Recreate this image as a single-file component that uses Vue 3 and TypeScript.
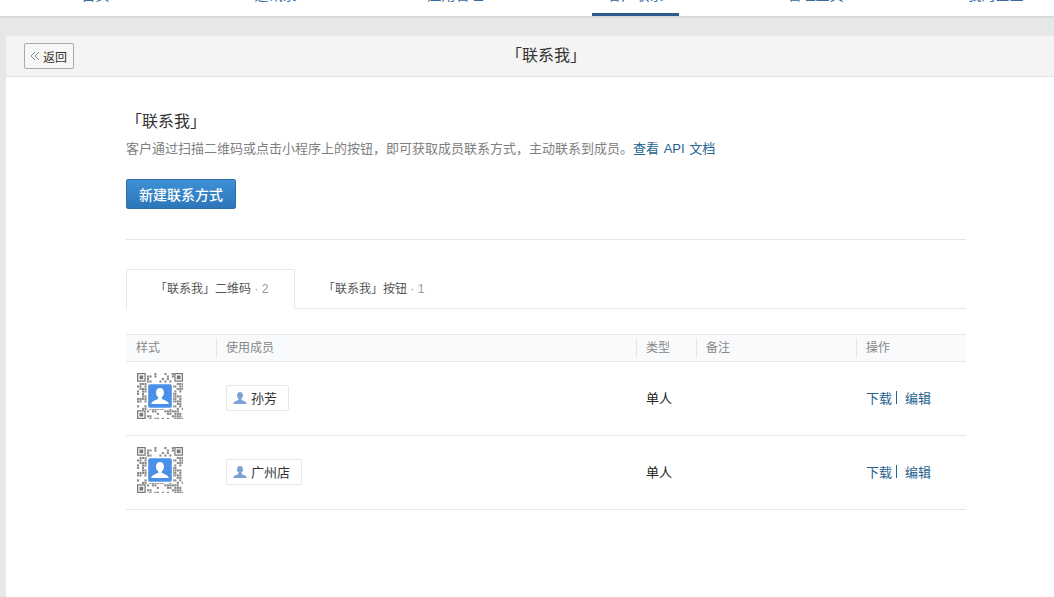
<script setup lang="ts">
const navItems = ['首页', '通讯录', '应用管理', '客户联系', '管理工具', '我的企业']

const columns = ['样式', '使用成员', '类型', '备注', '操作']

const rows = [
  { id: 1, member: '孙芳', type: '单人' },
  { id: 2, member: '广州店', type: '单人' },
]

// fake qr modules, seeded so both codes stay stable
const size = 37
function isFinder(x: number, y: number) {
  return (x < 8 && y < 8) || (x >= size - 8 && y < 8) || (x < 8 && y >= size - 8)
}
const cells: { x: number; y: number }[] = []
let seed = 73
for (let y = 0; y < size; y += 2) {
  for (let x = 0; x < size; x += 2) {
    seed = (seed * 137 + 29) % 1009
    if (!isFinder(x, y) && seed % 100 < 54) cells.push({ x, y })
  }
}
const finders = [
  { x: 0, y: 0 },
  { x: size - 7, y: 0 },
  { x: 0, y: size - 7 },
]
</script>

<template>
  <div class="page">
    <nav class="nav">
      <a v-for="(item, i) in navItems" :key="item" class="nav-item" :class="{ active: i === 3 }">{{ item }}</a>
    </nav>

    <main class="card">
      <header class="card-head">
        <button class="back">
          <svg width="10" height="10" viewBox="0 0 10 10" fill="none" stroke="#888" stroke-width="1">
            <path d="M5 1 1 5l4 4M9 1 5 5l4 4" />
          </svg>
          <span>返回</span>
        </button>
        <div class="head-title">「联系我」</div>
      </header>

      <section class="content">
        <h1 class="title">「联系我」</h1>
        <p class="desc">客户通过扫描二维码或点击小程序上的按钮，即可获取成员联系方式，主动联系到成员。<a class="link">查看 API 文档</a></p>
        <button class="primary">新建联系方式</button>
        <div class="divider"></div>

        <div class="tabs">
          <div class="tab active">「联系我」二维码<span class="count"> · 2</span></div>
          <div class="tab">「联系我」按钮<span class="count"> · 1</span></div>
        </div>

        <div class="table">
          <div class="row head">
            <div v-for="col in columns" :key="col" class="th">{{ col }}</div>
          </div>
          <div v-for="row in rows" :key="row.id" class="row body">
            <div class="td">
              <svg class="qr" width="46" height="46" :viewBox="`0 0 ${size} ${size}`">
                <rect v-for="c in cells" :key="`${c.x}-${c.y}`" :x="c.x" :y="c.y" width="1.700" height="1.700" fill="#8a8a8a" />
                <g v-for="f in finders" :key="`${f.x}-${f.y}`">
                  <rect :x="f.x + 0.5" :y="f.y + 0.5" width="6" height="6" fill="none" stroke="#777" stroke-width="1" />
                  <rect :x="f.x + 2" :y="f.y + 2" width="3" height="3" fill="#777" />
                </g>
                <rect x="8" y="8" width="21" height="21" fill="#fff" />
                <rect x="9" y="9" width="19" height="19" rx="1.5" fill="#4a90e8" />
                <path d="M18.500 12c2 0 3.200 1.600 3.200 3.600 0 1.700-.8 3.200-1.700 4v1.200c0 .7 4.900 1.500 5.500 3.700v.5H11.500v-.5c.6-2.200 5.500-3 5.500-3.700v-1.200c-.9-.8-1.700-2.300-1.700-4 0-2 1.200-3.600 3.200-3.600z" fill="#fff" />
              </svg>
            </div>
            <div class="td">
              <span class="chip">
                <svg width="14" height="14" viewBox="0 0 14 14">
                  <path d="M7 1c1.900 0 3 1.500 3 3.300 0 1.400-.6 2.700-1.500 3.400v1c0 .7 4.500 1.300 5 3.400v.9H.5v-.9c.5-2.100 5-2.700 5-3.400v-1C4.600 7 4 5.700 4 4.300 4 2.500 5.100 1 7 1z" fill="#7ba3d6" />
                </svg>
                {{ row.member }}
              </span>
            </div>
            <div class="td">{{ row.type }}</div>
            <div class="td"></div>
            <div class="td actions">
              <a class="link">下载</a>
              <i class="sep"></i>
              <a class="link">编辑</a>
            </div>
          </div>
        </div>
      </section>
    </main>
  </div>
</template>

<style scoped>
.page {
  height: 597px;
  overflow: hidden;
  background: #e6e7e9;
  font-family: "Liberation Sans", "Noto Sans CJK SC", sans-serif;
  color: #222;
}

/* page is scrolled, only the bottom of the nav is visible */
.nav {
  display: grid;
  grid-template-columns: repeat(6, 180px);
  height: 60px;
  margin-top: -44px;
  padding-left: 6px;
  background: #fff;
  box-shadow: 0 1px 2px rgba(0, 0, 0, 0.12);
  position: relative;
}
.nav-item {
  justify-self: center;
  width: 87px;
  box-sizing: border-box;
  height: 60px;
  padding-top: 29px;
  margin-left: -1px;
  line-height: 20px;
  font-size: 14px;
  text-align: center;
  color: #3a6a9e;
}
.nav-item.active {
  border-bottom: 3px solid #2f5a8c;
}

.card {
  margin: 20px 0 0 6px;
  height: 561px;
  background: #fff;
  border-top-left-radius: 3px;
}
.card-head {
  display: flex;
  align-items: center;
  height: 40px;
  padding: 0 36px 0 18px;
  background: #f4f4f4;
  border-bottom: 1px solid #e1e3e6;
}
.back {
  display: flex;
  align-items: center;
  gap: 3px;
  width: 50px;
  height: 26px;
  padding: 0 0 0 5px;
  box-sizing: border-box;
  background: #f7f7f7;
  border: 1px solid #aaa;
  border-radius: 2px;
  font: inherit;
  font-size: 12px;
  color: #333;
}
.head-title {
  flex: 1;
  margin-bottom: 4px;
  text-align: center;
  font-size: 16px;
  color: #333;
}

.content {
  width: 840px;
  margin-left: 120px;
  padding-top: 33px;
}
.title {
  margin: 0;
  font-size: 16px;
  font-weight: 400;
  line-height: 24px;
  color: #333;
}
.desc {
  margin: 5px 0 0;
  font-size: 13px;
  line-height: 20px;
  color: #808080;
}
.link {
  color: #24628f;
  word-spacing: 1px;
}
.primary {
  display: block;
  width: 110px;
  height: 30px;
  margin-top: 20px;
  padding: 0;
  background: linear-gradient(#3f90d6, #2b76b8);
  border: 1px solid #2a70ad;
  border-radius: 2px;
  font: inherit;
  font-size: 14px;
  font-weight: 500;
  color: #fff;
}
.divider {
  height: 1px;
  margin-top: 30px;
  background: #e4e6e9;
}

.tabs {
  display: flex;
  margin-top: 29px;
  border-bottom: 1px solid #e4e6e9;
}
.tab {
  height: 38px;
  padding: 0 27px;
  font-size: 12px;
  line-height: 38px;
  color: #555;
  white-space: nowrap;
  margin-bottom: -1px;
  border: 1px solid transparent;
  border-bottom: 0;
}
.tab.active {
  box-sizing: border-box;
  flex: none;
  width: 169px;
  height: 40px;
  padding: 0 0 0 28px;
  background: #fff;
  border-color: #e4e6e9;
  border-bottom: 1px solid #fff;
}
.count {
  color: #999;
}

.table {
  margin-top: 25px;
  font-size: 12px;
}
.row {
  display: grid;
  grid-template-columns: 90px 420px 60px 160px 110px;
  align-items: center;
}
.row.head {
  height: 26px;
  background: #f9fafc;
  border-top: 1px solid #e4e6e9;
  border-bottom: 1px solid #e4e6e9;
}
.th {
  height: 20px;
  padding-left: 9px;
  line-height: 20px;
  color: #888;
  border-left: 1px solid #e4e6e9;
}
.th:first-child {
  padding-left: 10px;
  border-left: 0;
}
.row.body {
  box-sizing: border-box;
  height: 74px;
  padding-bottom: 2px;
  border-bottom: 1px solid #e4e6e9;
  font-size: 13px;
}
.td {
  padding-left: 10px;
}
.qr {
  display: block;
  margin-left: 1px;
  margin-bottom: 4px;
}
.chip {
  display: inline-flex;
  align-items: center;
  gap: 4px;
  height: 26px;
  padding: 0 11px 0 6px;
  box-sizing: border-box;
  background: #fff;
  border: 1px solid #e4e6e9;
  border-radius: 2px;
  color: #333;
}
.actions {
  display: flex;
  align-items: center;
}
.sep {
  width: 1px;
  height: 13px;
  margin: 0 8px 0 4px;
  background: #24628f;
}
</style>

<style>
html,
body {
  margin: 0;
  overflow: hidden;
}
</style>
